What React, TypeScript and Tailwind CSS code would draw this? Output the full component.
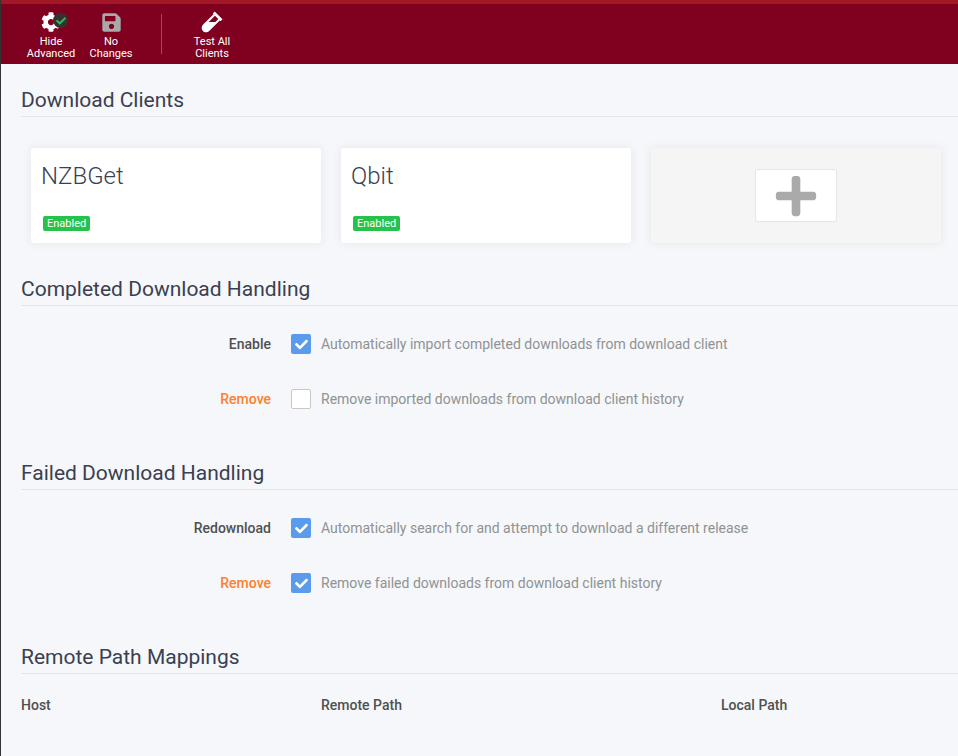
import { FaCog, FaSave, FaVial, FaCheck, FaPlus } from "react-icons/fa";

function SectionTitle({ children }: { children: string }) {
  return (
    <h2 className="text-[21px] leading-[30px] font-normal text-[#3a3f51] border-b border-[#e5e5e5] pb-[1px] mb-0">
      {children}
    </h2>
  );
}

function ToolbarButton({ lines, icon }: { lines: string[]; icon: React.ReactNode }) {
  return (
    <div className="w-[60px] flex flex-col items-center text-white text-[11px] leading-[12px]">
      <div className="h-[20px] flex items-center justify-center relative">{icon}</div>
      <div className="mt-[4px] text-center whitespace-nowrap">
        {lines.map((l) => (
          <div key={l}>{l}</div>
        ))}
      </div>
    </div>
  );
}

function ClientCard({ name }: { name: string }) {
  return (
    <div className="w-[290px] h-[95px] bg-white rounded-[3px] shadow-[0_0_10px_1px_rgba(0,0,0,0.06)] px-[10px] py-[10px]">
      <div className="text-[24px] leading-[36px] font-light text-[#3a3f51]">{name}</div>
      <div className="mt-[22px] ml-[2px] w-fit h-[15px] px-[4px] rounded-[2px] bg-[#27c24c] text-white text-[11px] leading-[15px]">
        Enabled
      </div>
    </div>
  );
}

function OptionRow({
  label,
  text,
  checked,
  advanced,
}: {
  label: string;
  text: string;
  checked: boolean;
  advanced?: boolean;
}) {
  return (
    <div className="flex items-center h-[20px] mb-[35px]">
      <div
        className={`w-[250px] text-right text-[14px] font-medium ${advanced ? "text-[#ff7f2b]" : "text-[#505050]"}`}
      >
        {label}
      </div>
      {checked ? (
        <div className="ml-[20px] w-[20px] h-[20px] rounded-[2px] bg-[#5b9bec] flex items-center justify-center">
          <FaCheck className="text-white text-[13px]" />
        </div>
      ) : (
        <div className="ml-[20px] w-[20px] h-[20px] rounded-[2px] bg-white border border-[#c8c8c8]" />
      )}
      <div className="ml-[10px] text-[14px] text-[#909293]">{text}</div>
    </div>
  );
}

export default function App() {
  return (
    <div
      className="w-[958px] h-[756px] overflow-hidden bg-[#f5f7fa] border-l border-[#333333]"
      style={{ fontFamily: "Roboto, sans-serif" }}
    >
      <div className="h-[4px] bg-[#a41726]" />
      <div className="h-[60px] bg-[#7f001f] flex items-start pt-[8px] pl-[20px]">
        <ToolbarButton
          lines={["Hide", "Advanced"]}
          icon={
            <>
              <FaCog className="text-white text-[20px]" />
              <span className="absolute left-[12px] top-[1px] w-[15px] h-[15px] rounded-full bg-[#333] flex items-center justify-center">
                <FaCheck className="text-[#27c24c] text-[10px]" />
              </span>
            </>
          }
        />
        <ToolbarButton lines={["No", "Changes"]} icon={<FaSave className="text-[#a9a9a9] text-[21px]" />} />
        <div className="w-px h-[40px] bg-[#a8445c] ml-[20px] mr-[20px] mt-[2px]" />
        <ToolbarButton lines={["Test All", "Clients"]} icon={<FaVial className="text-white text-[22px]" />} />
      </div>

      <div className="pl-[20px]">
        <div className="pt-[21px]">
          <SectionTitle>Download Clients</SectionTitle>
        </div>
        <div className="flex gap-[20px] pl-[10px] pt-[31px]">
          <ClientCard name="NZBGet" />
          <ClientCard name="Qbit" />
          <div className="w-[290px] h-[95px] bg-[#f5f5f5] rounded-[3px] shadow-[0_0_10px_1px_rgba(0,0,0,0.06)] flex items-center justify-center">
            <div className="w-[82px] h-[53px] bg-white border border-[#e5e5e5] rounded-[3px] flex items-center justify-center">
              <FaPlus className="text-[#aaaaaa] text-[46px]" />
            </div>
          </div>
        </div>

        <div className="pt-[31px]">
          <SectionTitle>Completed Download Handling</SectionTitle>
        </div>
        <div className="pt-[28px]">
          <OptionRow label="Enable" text="Automatically import completed downloads from download client" checked />
          <OptionRow label="Remove" text="Remove imported downloads from download client history" checked={false} advanced />
        </div>

        <div className="pt-[14px]">
          <SectionTitle>Failed Download Handling</SectionTitle>
        </div>
        <div className="pt-[28px]">
          <OptionRow label="Redownload" text="Automatically search for and attempt to download a different release" checked />
          <OptionRow label="Remove" text="Remove failed downloads from download client history" checked advanced />
        </div>

        <div className="pt-[14px]">
          <SectionTitle>Remote Path Mappings</SectionTitle>
        </div>
        <div className="flex pt-[21px] text-[14px] font-medium text-[#505050]">
          <div className="w-[300px]">Host</div>
          <div className="w-[400px]">Remote Path</div>
          <div>Local Path</div>
        </div>
      </div>
    </div>
  );
}
